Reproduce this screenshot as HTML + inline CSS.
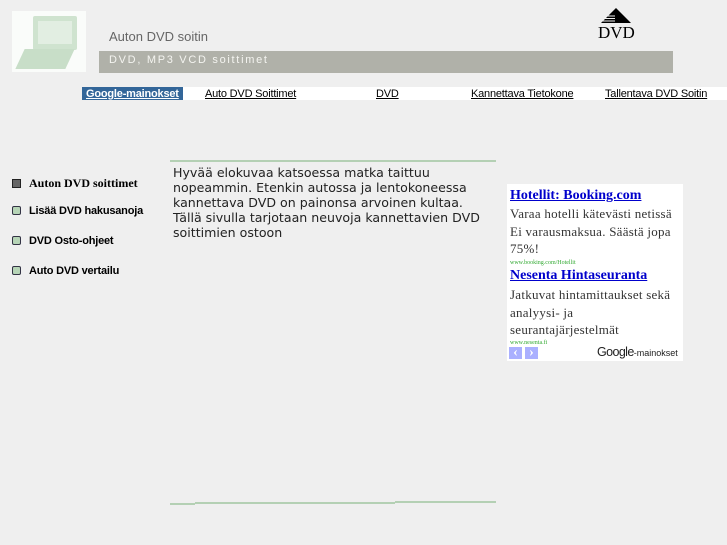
<!DOCTYPE html>
<html><head><meta charset="utf-8"><style>
*{margin:0;padding:0;box-sizing:border-box}
body{width:727px;height:545px;background:#efefef;position:relative;overflow:hidden;font-family:"Liberation Sans",sans-serif}
.a{position:absolute}
.nav a{position:absolute;top:88px;font-size:11px;color:#000;text-decoration:underline;letter-spacing:-0.2px;height:13px;line-height:13px}
.menu{position:absolute;left:12px;font-size:11px;font-weight:bold;letter-spacing:-0.2px;color:#000}
.menu i{display:inline-block;width:9px;height:9px;border:1px solid #334;border-radius:2px;background:#b6d4b6;margin-right:8px;vertical-align:-1px}
.ad{font-size:13px;line-height:17.5px;color:#333;letter-spacing:0.25px;width:170px}
</style></head><body>
<div class="a" style="left:12px;top:11px;width:74px;height:61px;background:#fafcfa">
 <div class="a" style="left:21px;top:5px;width:44px;height:34px;background:#cfe3cf;border-radius:2px"></div>
 <div class="a" style="left:26px;top:10px;width:34px;height:23px;background:#e2eee2"></div>
 <div class="a" style="left:8px;top:38px;width:50px;height:20px;background:#c8dec8;transform:skewX(-25deg)"></div>
</div>
<div class="a" style="left:109px;top:29px;font-size:13px;color:#666">Auton DVD soitin</div>
<div class="a" style="left:99px;top:51px;width:574px;height:22px;background:#b0b1a9"></div>
<div class="a" style="left:109px;top:54px;font-size:11px;color:#f4f4f0;letter-spacing:1.7px">DVD, MP3 VCD soittimet</div>
<svg class="a" style="left:600px;top:8px" width="32" height="16" viewBox="0 0 32 16"><path d="M16 0L31 15H1Z" fill="#000"/><path d="M1 8h14M1 10.5h14M1 13h14" stroke="#efefef" stroke-width="1"/></svg>
<div class="a" style="left:598px;top:23px;font-family:'Liberation Serif',serif;font-size:17px;color:#000">DVD</div>
<div class="a" style="left:82px;top:87px;width:645px;height:13px;background:#fff"></div>
<div class="a" style="left:82px;top:87px;width:101px;height:13px;background:#336699"></div>
<div class="nav">
<a style="left:86px;color:#fff;font-weight:bold">Google-mainokset</a>
<a style="left:205px">Auto DVD Soittimet</a>
<a style="left:376px">DVD</a>
<a style="left:471px">Kannettava Tietokone</a>
<a style="left:605px">Tallentava DVD Soitin</a>
</div>
<div class="menu" style="top:176px;font-family:'Liberation Serif',serif;font-size:12px;letter-spacing:0"><i style="background:#666;border-color:#222;border-radius:0"></i>Auton DVD soittimet</div>
<div class="menu" style="top:205px"><i></i>Lisää DVD hakusanoja</div>
<div class="menu" style="top:235px"><i></i>DVD Osto-ohjeet</div>
<div class="menu" style="top:265px"><i></i>Auto DVD vertailu</div>
<div class="a" style="left:170px;top:160px;width:326px;height:2px;background:#b4d0b4"></div>
<div class="a" style="left:173px;top:165px;width:312px;font-family:'DejaVu Sans',sans-serif;font-size:12.6px;line-height:15px;color:#222">Hyvää elokuvaa katsoessa matka taittuu nopeammin. Etenkin autossa ja lentokoneessa kannettava DVD on painonsa arvoinen kultaa. Tällä sivulla tarjotaan neuvoja kannettavien DVD soittimien ostoon</div>
<div class="a" style="left:170px;top:503px;width:25px;height:2px;background:#b4d0b4"></div>
<div class="a" style="left:195px;top:502px;width:200px;height:2px;background:#b4d0b4"></div>
<div class="a" style="left:395px;top:501px;width:101px;height:2px;background:#b4d0b4"></div>
<div class="a" style="left:507px;top:184px;width:176px;height:177px;background:#fff;font-family:'Liberation Serif',serif">
 <div class="a" style="left:3px;top:4px;font-size:14px;font-weight:bold;color:#00c;text-decoration:underline">Hotellit: Booking.com</div>
 <div class="a ad" style="left:3px;top:21px">Varaa hotelli kätevästi netissä Ei varausmaksua. Säästä jopa 75%!</div>
 <div class="a" style="left:3px;top:76px;font-size:6px;color:#3a3">www.booking.com/Hotellit</div>
 <div class="a" style="left:3px;top:84px;font-size:14px;font-weight:bold;color:#00c;text-decoration:underline">Nesenta Hintaseuranta</div>
 <div class="a ad" style="left:3px;top:102px">Jatkuvat hintamittaukset sekä analyysi- ja seurantajärjestelmät</div>
 <div class="a" style="left:3px;top:156px;font-size:6px;color:#3a3">www.nesenta.fi</div>
 <div class="a" style="left:2px;top:163px;width:13px;height:12px;background:#aab0ff;color:#fff;font-size:14px;font-weight:bold;text-align:center;line-height:11px">‹</div>
 <div class="a" style="left:18px;top:163px;width:13px;height:12px;background:#aab0ff;color:#fff;font-size:14px;font-weight:bold;text-align:center;line-height:11px">›</div>
 <div class="a" style="left:90px;top:161px;font-family:'Liberation Sans',sans-serif;font-size:12.5px;color:#222;letter-spacing:-0.6px">Google<span style="font-size:9px;letter-spacing:0">-mainokset</span></div>
</div>
</body></html>
